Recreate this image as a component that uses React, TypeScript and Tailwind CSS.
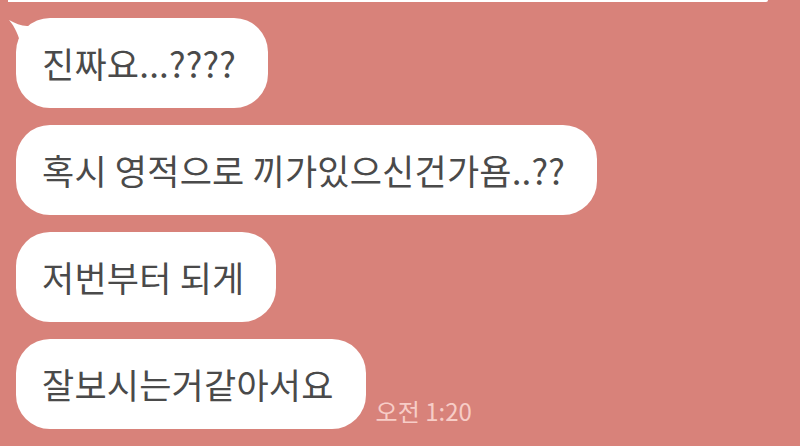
const messages = [
  { text: '진짜요...????', tail: true },
  { text: '혹시 영적으로 끼가있으신건가욤..??' },
  { text: '저번부터 되게' },
  { text: '잘보시는거같아서요', time: '오전 1:20' },
];

function Bubble({ text, tail }: { text: string; tail?: boolean }) {
  return (
    <div className="relative bg-white rounded-[34px] h-[90px] pl-[26px] pr-[32px] flex items-center">
      {tail && (
        <svg className="absolute -left-[7px] top-[2px]" width="26" height="26" viewBox="0 0 26 26">
          <path d="M0 0 C6 3 12 6 18 6 L26 6 L26 26 L12 26 C10 16 6 7 0 0 Z" fill="white" />
        </svg>
      )}
      <span className="text-[35px] leading-none text-[#4a4a4a] tracking-[0.2px] -mt-[2px]">{text}</span>
    </div>
  );
}

export default function App() {
  return (
    <div
      className="w-[800px] h-[446px] overflow-hidden bg-[#d8827a]"
      style={{ fontFamily: '"Noto Sans CJK KR", "Noto Sans", sans-serif' }}
    >
      <div className="ml-[8px] w-[760px] h-[2px] bg-white rounded-br-[2px]" />
      <div className="flex flex-col gap-[17px] pt-[16px] pl-[16px]">
        {messages.map((m, i) => (
          <div key={i} className="flex items-end gap-[10px]">
            <Bubble text={m.text} tail={m.tail} />
            {m.time && (
              <span className="text-[24px] leading-none text-[#f7cdc7] mb-[6px]">{m.time}</span>
            )}
          </div>
        ))}
      </div>
    </div>
  );
}
